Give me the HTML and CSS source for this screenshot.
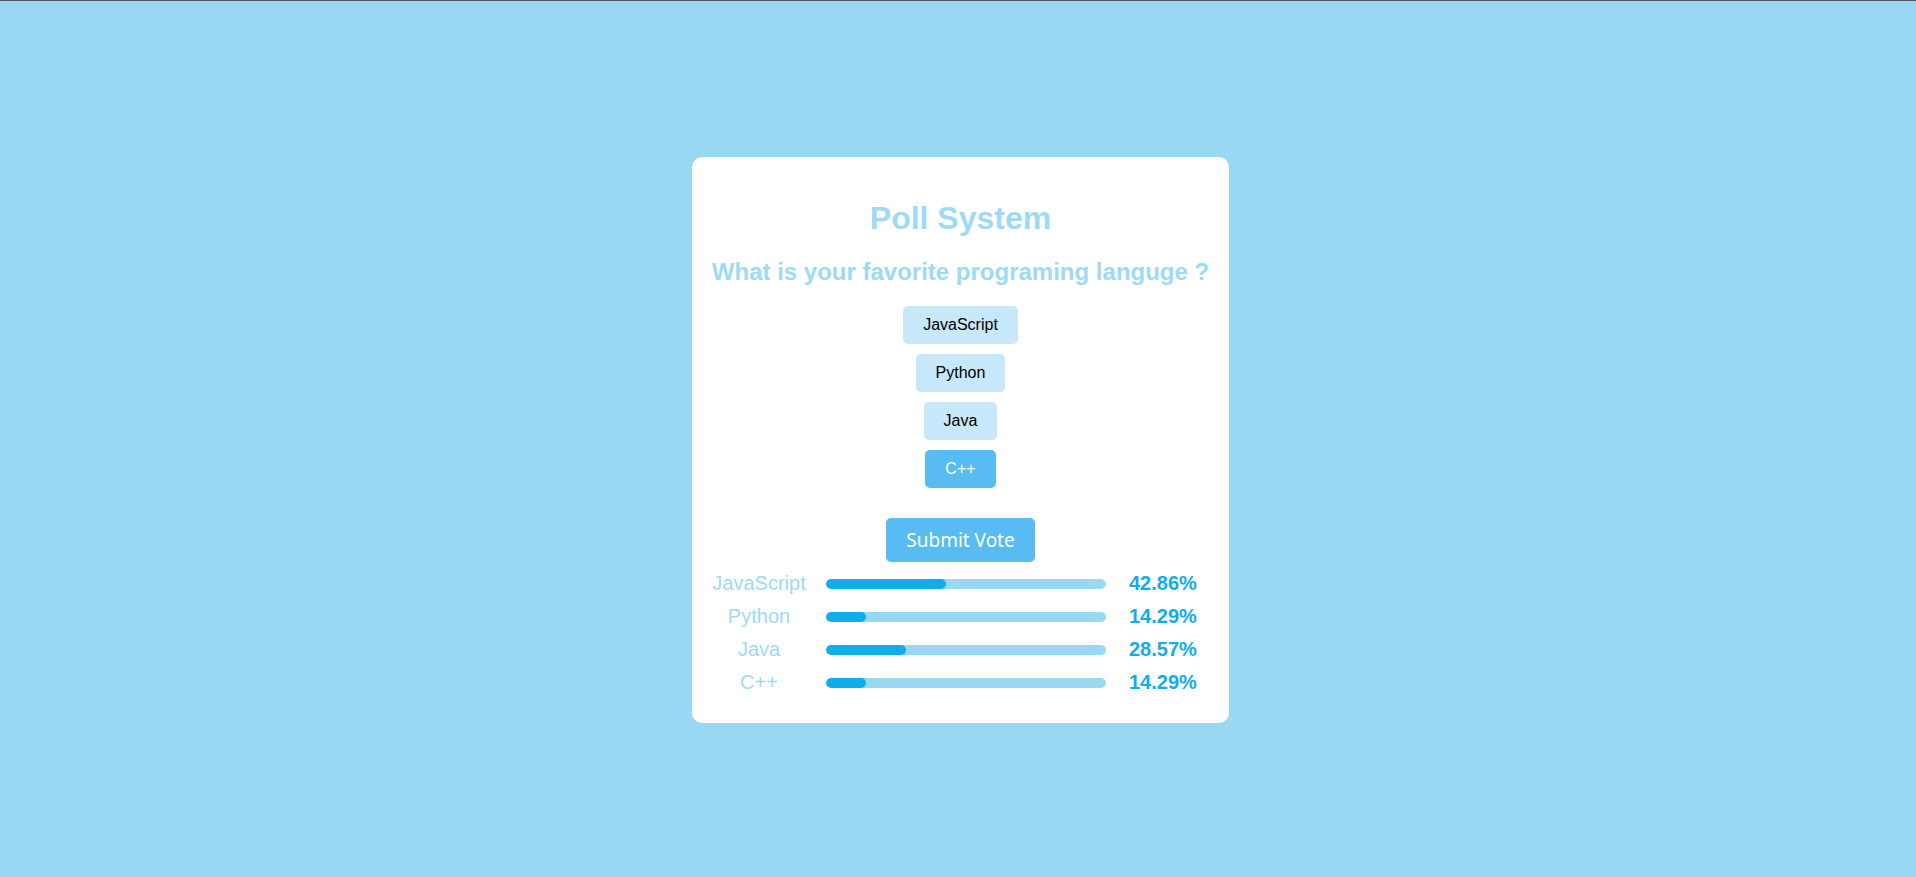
FILE: index.html
```html
<!DOCTYPE html>
<html lang="en">
<head>
<meta charset="utf-8">
<title>Poll System</title>
<link rel="stylesheet" href="styles.css">
</head>
<body>
<div class="page">
  <div class="card">
    <h1 class="title">Poll System</h1>
    <h2 class="question">What is your favorite programing languge ?</h2>
    <div class="options">
      <button class="option">JavaScript</button>
      <button class="option">Python</button>
      <button class="option">Java</button>
      <button class="option selected">C++</button>
    </div>
    <button class="submit">Submit Vote</button>
    <div class="results">
      <div class="row">
        <span class="label">JavaScript</span>
        <div class="track"><div class="fill" style="width:42.86%"></div></div>
        <span class="pct">42.86%</span>
      </div>
      <div class="row">
        <span class="label">Python</span>
        <div class="track"><div class="fill" style="width:14.29%"></div></div>
        <span class="pct">14.29%</span>
      </div>
      <div class="row">
        <span class="label">Java</span>
        <div class="track"><div class="fill" style="width:28.57%"></div></div>
        <span class="pct">28.57%</span>
      </div>
      <div class="row">
        <span class="label">C++</span>
        <div class="track"><div class="fill" style="width:14.29%"></div></div>
        <span class="pct">14.29%</span>
      </div>
    </div>
  </div>
</div>
</body>
</html>
```
FILE: styles.css
```css
html, body {
  margin: 0;
  padding: 0;
}
body {
  background: #98d8f2;
  border-top: 1px solid #50545c;
  font-family: "Liberation Sans", Arial, sans-serif;
  min-height: 876px;
}
.page {
  display: flex;
  justify-content: center;
  padding-top: 156px;
  padding-left: 5px;
}
.card {
  width: 497px;
  background: #ffffff;
  border-radius: 10px;
  padding: 20px;
  display: flex;
  flex-direction: column;
  align-items: center;
}
.title {
  font-size: 32px;
  font-weight: bold;
  color: #9ddaf5;
  margin: 23px 0 21px;
  line-height: 37px;
}
.question {
  font-size: 24px;
  font-weight: bold;
  color: #9ddaf5;
  margin: 0 0 20px;
  line-height: 28px;
  white-space: nowrap;
}
.options {
  display: flex;
  flex-direction: column;
  align-items: center;
  gap: 10px;
  margin-bottom: 30px;
}
.option {
  font-family: "Liberation Sans", Arial, sans-serif;
  font-size: 16px;
  line-height: 18px;
  padding: 10px 20px;
  border: none;
  border-radius: 5px;
  background: #c6e8fa;
  color: #000000;
}
.option.selected {
  background: #58bcf3;
  color: #ffffff;
}
.submit {
  font-family: "Noto Sans", "Open Sans", sans-serif;
  font-size: 19px;
  line-height: 24px;
  padding: 10px 20px;
  border: none;
  border-radius: 5px;
  background: #58bcf3;
  color: #ffffff;
  margin-bottom: 10px;
}
.results {
  align-self: stretch;
  display: flex;
  flex-direction: column;
  gap: 10px;
  margin-bottom: 9px;
}
.row {
  display: flex;
  align-items: center;
  height: 23px;
}
.label {
  width: 94px;
  text-align: center;
  font-size: 20px;
  color: #9ddaf5;
  white-space: nowrap;
  margin-right: 20px;
}
.track {
  width: 280px;
  height: 10px;
  border-radius: 5px;
  background: #98d8f3;
  overflow: hidden;
  margin-right: 23px;
}
.fill {
  height: 100%;
  border-radius: 5px;
  background: #12abeb;
}
.pct {
  font-size: 20px;
  font-weight: bold;
  color: #12abeb;
}
```
